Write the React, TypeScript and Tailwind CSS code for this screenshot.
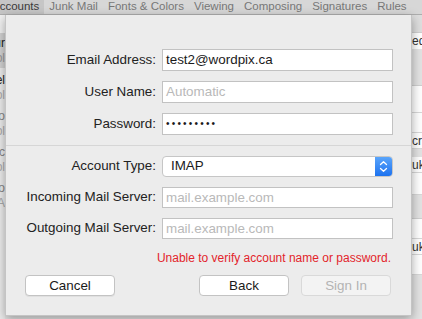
import React from "react";

const tabs = ["Junk Mail", "Fonts & Colors", "Viewing", "Composing", "Signatures", "Rules"];

function Field({ label, children }: { label: string; children: React.ReactNode }) {
  return (
    <div className="flex items-center">
      <div className="w-[150px] shrink-0 text-right text-[13.4px] text-[#222]">{label}</div>
      <div className="ml-[6px] w-[231px]">{children}</div>
    </div>
  );
}

function TextInput({ value, placeholder, h = "h-[22px]" }: { value?: string; placeholder?: string; h?: string }) {
  return (
    <div className={`${h} w-full border border-[#c2c2c2] bg-white flex items-center pl-[3px] text-[13.4px] leading-none`}>
      {value ? (
        <span className="text-[#1a1a1a]">{value}</span>
      ) : (
        <span className="text-[#b9b9b9]">{placeholder}</span>
      )}
    </div>
  );
}

export default function App() {
  return (
    <div className="w-[422px] h-[319px] overflow-hidden bg-[#e6e6e6] flex flex-col font-['Liberation_Sans',Arial,sans-serif]">
      {/* toolbar */}
      <div className="h-[15px] shrink-0 bg-[#d7d7d7] border-b border-[#aeaeae] flex items-stretch text-[11.5px] text-[#777] leading-none overflow-hidden whitespace-nowrap">
        <div className="bg-[#c6c6c6] text-[#3a3a3a] pr-[5px] ml-[-8px] pl-0 flex items-center">Accounts</div>
        {tabs.map((t) => (
          <div key={t} className="px-[5px] flex items-center">
            {t}
          </div>
        ))}
      </div>

      <div className="flex flex-1 min-h-0">
        {/* left strip */}
        <div className="w-[5px] shrink-0 flex flex-col overflow-hidden bg-[#ececec] text-[12px] leading-none">
          <div className="h-[18px] bg-[#f2f2f2]" />
          <div className="h-[35px] bg-[#d2d2d2] flex flex-col items-end pt-[4px] gap-[3px]">
            <span className="text-[#222]">ur</span>
            <span className="text-[#999]">pl</span>
          </div>
          <div className="h-[36px] flex flex-col items-end pt-[6px] gap-[3px]">
            <span className="text-[#222]">el</span>
            <span className="text-[#aaa]">pl</span>
          </div>
          <div className="h-[36px] flex flex-col items-end pt-[6px] gap-[3px]">
            <span className="text-[#888]">oo</span>
            <span className="text-[#aaa]">pl</span>
          </div>
          <div className="h-[36px] flex flex-col items-end pt-[6px] gap-[3px]">
            <span className="text-[#888]">ic</span>
            <span className="text-[#aaa]">pl</span>
          </div>
          <div className="h-[36px] flex flex-col items-end pt-[6px] gap-[3px]">
            <span className="text-[#888]">lo</span>
            <span className="text-[#aaa]">A</span>
          </div>
          <div className="flex-1" />
        </div>

        {/* sheet */}
        <div className="w-[407px] h-[301px] shrink-0 bg-[#ececec] border-x border-b border-[#c4c4c4] shadow-[0_3px_10px_rgba(0,0,0,0.35)] relative z-10 flex flex-col pt-[34px]">
          <div className="flex flex-col gap-[10px]">
            <Field label="Email Address:">
              <TextInput value="test2@wordpix.ca" />
            </Field>
            <Field label="User Name:">
              <TextInput placeholder="Automatic" />
            </Field>
            <Field label="Password:">
              <div className="h-[22px] w-full border border-[#c2c2c2] bg-white flex items-center pl-[3px] text-[10px] leading-none tracking-[2.2px] text-[#1a1a1a]">
                •••••••••
              </div>
            </Field>
          </div>

          <div className="h-px bg-[#d6d6d6] mt-[10px]" />

          <div className="flex flex-col gap-[10px] mt-[10px]">
            <Field label="Account Type:">
              <div className="h-[21px] w-full rounded-[4px] border border-[#c6c6c6] bg-white flex items-stretch overflow-hidden">
                <div className="flex-1 flex items-center pl-[8px] text-[13.4px] text-[#1a1a1a]">IMAP</div>
                <div className="w-[17px] bg-gradient-to-b from-[#5aa5fb] to-[#1c72ef] flex items-center justify-center">
                  <svg width="9" height="13" viewBox="0 0 9 13" fill="none">
                    <path d="M1.5 4.5L4.5 1.8L7.5 4.5" stroke="white" strokeWidth="1.3" strokeLinecap="round" strokeLinejoin="round" />
                    <path d="M1.5 8.5L4.5 11.2L7.5 8.5" stroke="white" strokeWidth="1.3" strokeLinecap="round" strokeLinejoin="round" />
                  </svg>
                </div>
              </div>
            </Field>
            <Field label="Incoming Mail Server:">
              <TextInput placeholder="mail.example.com" h="h-[21px]" />
            </Field>
            <Field label="Outgoing Mail Server:">
              <TextInput placeholder="mail.example.com" h="h-[21px]" />
            </Field>
          </div>

          <div className="mt-[12px] pr-[20px] text-right text-[12px] leading-[14px] text-[#e3242b]">
            Unable to verify account name or password.
          </div>

          <div className="mt-[10px] flex items-center pl-[19px] pr-[20px]">
            <button className="w-[90px] h-[21px] rounded-[4px] border border-[#c3c3c3] bg-white text-[13.4px] text-[#1a1a1a] leading-none shadow-[0_1px_0_rgba(0,0,0,0.05)]">
              Cancel
            </button>
            <div className="flex-1" />
            <button className="w-[90px] h-[21px] rounded-[4px] border border-[#c3c3c3] bg-white text-[13.4px] text-[#1a1a1a] leading-none">
              Back
            </button>
            <button className="ml-[12px] w-[90px] h-[21px] rounded-[4px] border border-[#d9d9d9] bg-[#f3f3f3] text-[13.4px] text-[#b3b3b3] leading-none">
              Sign In
            </button>
          </div>
        </div>

        {/* right strip */}
        <div className="flex-1 flex flex-col overflow-hidden text-[12px] leading-none whitespace-nowrap">
          <div className="h-[18px] bg-[#dedede] border-b border-[#cfcfcf]" />
          <div className="h-[16px] bg-white flex items-center text-[#333]">ed</div>
          <div className="h-[37px] bg-[#e3e3e3] border-b border-[#d0d0d0]" />
          <div className="h-[27px] bg-white border-b border-[#d8d8d8]" />
          <div className="h-[20px] bg-white border-b border-[#d8d8d8]" />
          <div className="h-[16px] bg-white flex items-center text-[#333] border-b border-[#d8d8d8]">cr</div>
          <div className="h-[8px] bg-[#e3e3e3]" />
          <div className="h-[16px] bg-white flex items-center text-[#333] border-b border-[#d8d8d8]">uk</div>
          <div className="h-[22px] bg-white border-b border-[#d8d8d8]" />
          <div className="h-[24px] bg-[#e3e3e3] border-b border-[#d0d0d0]" />
          <div className="h-[20px] bg-white border-b border-[#d8d8d8]" />
          <div className="h-[16px] bg-white flex items-center text-[#333] border-b border-[#d8d8d8]">uk</div>
          <div className="h-[20px] bg-white border-b border-[#d8d8d8]" />
          <div className="flex-1 bg-[#e3e3e3]" />
        </div>
      </div>
    </div>
  );
}
